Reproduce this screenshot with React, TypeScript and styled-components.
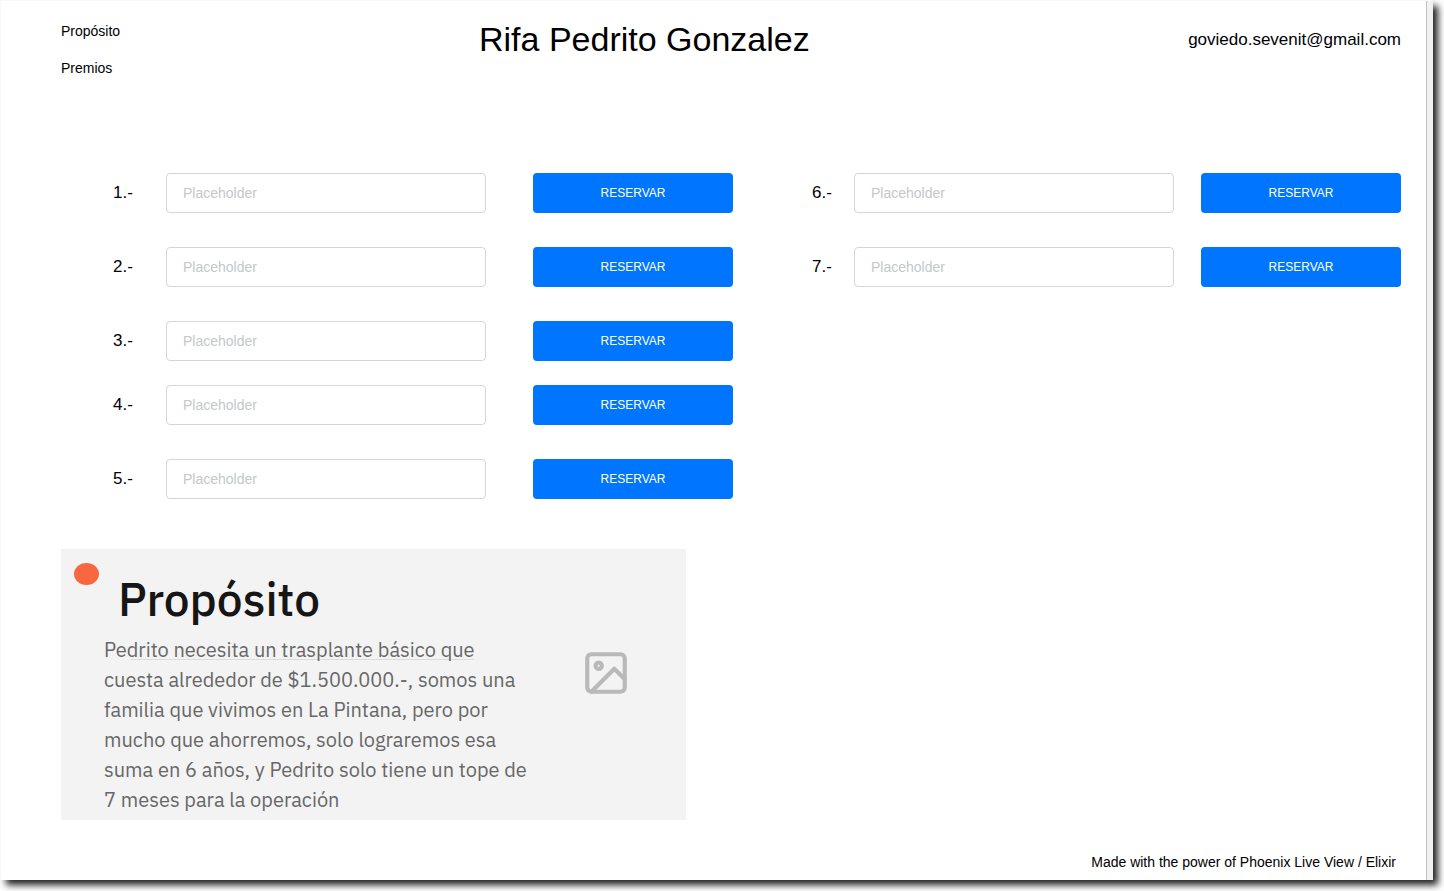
import React from 'react';
import styled, { createGlobalStyle } from 'styled-components';

const GlobalStyle = createGlobalStyle`
  *, *::before, *::after { box-sizing: border-box; }
  body {
    margin: 0;
    background: #fff;
    color: #000;
    font-family: "Liberation Sans", Arial, sans-serif;
    font-size: 14px;
  }
  #root { display: flow-root; }
`;

const Sheet = styled.div`
  display: flex;
  flex-direction: column;
  min-height: calc(100vh - 12px);
  margin: 1px 11px 11px 1px;
  padding: 20px 26px 8px 60px;
  border-right: 6px solid #f1f1f1;
  background: #fff;
  box-shadow: inset -1px 0 #c1c1c1, -1px -1px #f8f8f8, 5px 5px 7px #222;
`;

const Header = styled.header`
  display: grid;
  grid-template-columns: 418px 1fr auto;
  align-items: start;
`;

const Nav = styled.nav`
  display: flex;
  flex-direction: column;
  align-items: flex-start;
  gap: 17px;
`;

const NavLink = styled.a`
  color: inherit;
  line-height: 20px;
  text-decoration: none;
`;

const Title = styled.h1`
  margin: 0;
  font-size: 34px;
  font-weight: 400;
  line-height: 36px;
`;

const Email = styled.a`
  color: inherit;
  font-size: 17px;
  line-height: 38px;
  text-decoration: none;
`;

const Board = styled.main`
  display: flex;
  justify-content: space-between;
  gap: 24px;
  margin-top: 95px;
  padding-left: 52px;
`;

const Column = styled.div`
  display: flex;
  flex-direction: column;
  gap: 24px;
`;

const Group = styled.div`
  display: flex;
  flex-direction: column;
  gap: 34px;
`;

const Row = styled.form<{ $compact?: boolean }>`
  display: grid;
  grid-template-columns: ${(p) =>
    p.$compact ? '42px minmax(120px, 320px) 227px' : '53px minmax(120px, 320px) 247px'};
  align-items: center;
`;

const NumberLabel = styled.label`
  font-size: 17px;
  line-height: 20px;
`;

const Field = styled.input`
  width: 100%;
  height: 40px;
  padding: 0 16px;
  border: 1px solid #d3d6d8;
  border-radius: 4px;
  background: #fff;
  font: inherit;

  &::placeholder {
    color: #c3c8c8;
    opacity: 1;
  }
`;

const ReserveButton = styled.button`
  justify-self: end;
  width: 200px;
  height: 40px;
  padding: 0;
  border: 0;
  border-radius: 4px;
  background: #0075ff;
  color: #fff;
  font: inherit;
  font-size: 12px;
  cursor: pointer;
`;

const PurposeCard = styled.section`
  display: flex;
  align-items: flex-start;
  justify-content: space-between;
  width: 625px;
  max-width: 100%;
  margin-top: 50px;
  padding: 14px 55px 5px 13px;
  background: #f3f3f3;
  font-family: "IBM Plex Sans", Roboto, sans-serif;
`;

const PurposeBody = styled.div`
  width: 460px;
`;

const PurposeHead = styled.div`
  display: flex;
  align-items: flex-start;
  gap: 19px;
`;

const Dot = styled.span`
  width: 25px;
  height: 22px;
  border-radius: 50%;
  background: #f96741;
`;

const PurposeTitle = styled.h2`
  margin: 0;
  padding-top: 6px;
  color: #161616;
  font-size: 46px;
  font-weight: 500;
  line-height: 60px;
`;

const PurposeText = styled.p`
  position: relative;
  margin: 6px 0 0 30px;
  color: #676767;
  font-size: 20px;
  line-height: 30px;
  z-index: 0;

  &::before {
    content: "";
    position: absolute;
    z-index: -1;
    top: 24px;
    left: 27px;
    width: 343px;
    height: 1px;
    background: #dcdcdc;
  }
`;

const Picture = styled.svg`
  flex: none;
  margin-top: 85px;
`;

const Footer = styled.footer`
  margin-top: auto;
  padding-right: 5px;
  line-height: 20px;
  text-align: right;
`;

const Reservation = ({ number, compact }: { number: number; compact?: boolean }) => (
  <Row $compact={compact} onSubmit={(e) => e.preventDefault()}>
    <NumberLabel htmlFor={`number-${number}`}>{number}.-</NumberLabel>
    <Field id={`number-${number}`} type="text" placeholder="Placeholder" />
    <ReserveButton type="submit">RESERVAR</ReserveButton>
  </Row>
);

const App = () => (
  <>
    <GlobalStyle />
    <Sheet>
      <Header>
        <Nav>
          <NavLink href="#proposito">Propósito</NavLink>
          <NavLink href="#premios">Premios</NavLink>
        </Nav>
        <Title>Rifa Pedrito Gonzalez</Title>
        <Email href="mailto:goviedo.sevenit@gmail.com">goviedo.sevenit@gmail.com</Email>
      </Header>

      <Board>
        <Column>
          <Group>
            {[1, 2, 3].map((n) => (
              <Reservation key={n} number={n} />
            ))}
          </Group>
          <Group>
            {[4, 5].map((n) => (
              <Reservation key={n} number={n} />
            ))}
          </Group>
        </Column>
        <Column>
          <Group>
            {[6, 7].map((n) => (
              <Reservation key={n} number={n} compact />
            ))}
          </Group>
        </Column>
      </Board>

      <PurposeCard id="proposito">
        <PurposeBody>
          <PurposeHead>
            <Dot />
            <PurposeTitle>Propósito</PurposeTitle>
          </PurposeHead>
          <PurposeText>
            Pedrito necesita un trasplante básico que cuesta alrededor de $1.500.000.-, somos una
            familia que vivimos en La Pintana, pero por mucho que ahorremos, solo lograremos esa
            suma en 6 años, y Pedrito solo tiene un tope de 7 meses para la operación
          </PurposeText>
        </PurposeBody>
        <Picture
          width="50"
          height="50"
          viewBox="0 0 24 24"
          fill="none"
          stroke="#b9b9b9"
          strokeWidth="2"
          strokeLinecap="round"
          strokeLinejoin="round"
          aria-hidden="true"
        >
          <rect x="3" y="3" width="18" height="18" rx="2" />
          <circle cx="8.5" cy="8.5" r="1.5" />
          <path d="M21 15l-5-5L5 21" />
        </Picture>
      </PurposeCard>

      <Footer>Made with the power of Phoenix Live View / Elixir</Footer>
    </Sheet>
  </>
);

export default App;
